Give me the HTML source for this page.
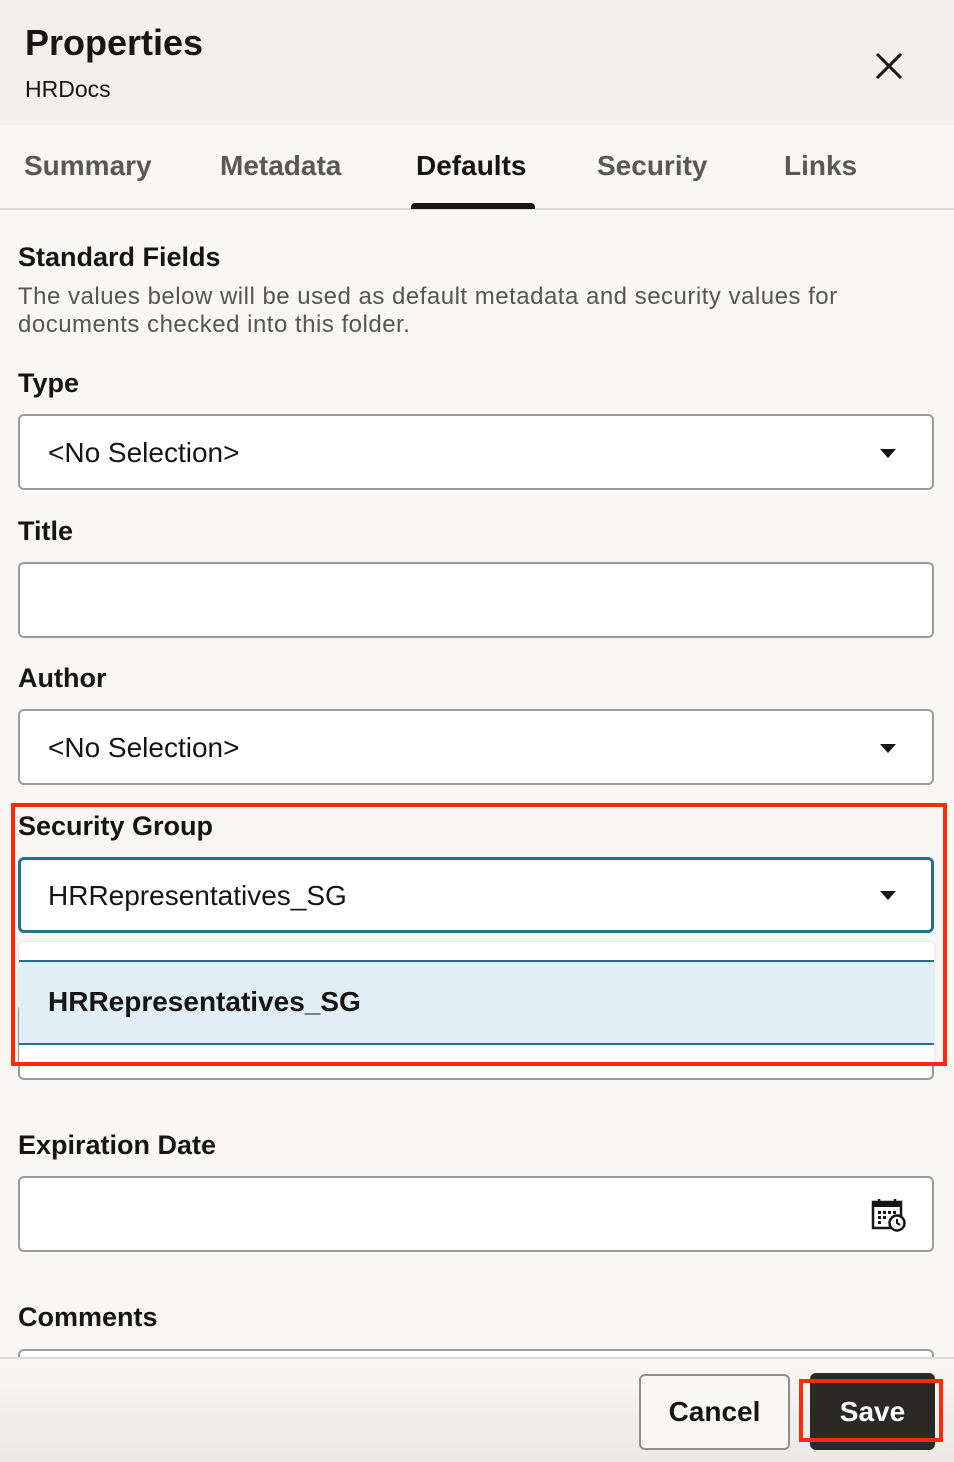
<!DOCTYPE html>
<html><head><style>
*{box-sizing:border-box;margin:0;padding:0}
body{width:954px;height:1462px;background:#f8f7f5;font-family:"Liberation Sans",sans-serif;color:#161513;position:relative;overflow:hidden}
.a{position:absolute}
.hdr{left:0;top:0;width:954px;height:125px;background:#f1f0ee}
.tab{top:150px;font-size:28px;color:#5a5856;font-weight:bold}
.lbl{font-size:27px;font-weight:bold;left:18px}
.inp{left:18px;width:916px;height:76px;background:#fff;border:2px solid #9b9a98;border-radius:6px}
.txt{left:28px;top:21px;font-size:28px}
.car{right:36px;top:33px;width:0;height:0;border-left:8px solid transparent;border-right:8px solid transparent;border-top:9px solid #161513}
</style></head><body>
<div class="a hdr"></div>
<div class="a" style="left:25px;top:22px;font-size:36px;font-weight:bold">Properties</div>
<div class="a" style="left:25px;top:76px;font-size:23px">HRDocs</div>
<svg class="a" style="left:875px;top:52px" width="28" height="28" viewBox="0 0 28 28"><path d="M2 2L26 26M26 2L2 26" stroke="#161513" stroke-width="3"/></svg>
<div class="a tab" style="left:24px">Summary</div>
<div class="a tab" style="left:220px">Metadata</div>
<div class="a tab" style="left:416px;color:#161513">Defaults</div>
<div class="a tab" style="left:597px">Security</div>
<div class="a tab" style="left:784px">Links</div>
<div class="a" style="left:0;top:208px;width:954px;height:2px;background:#dcdbd9"></div>
<div class="a" style="left:411px;top:203px;width:124px;height:6px;background:#161513;border-radius:4px 4px 0 0"></div>
<div class="a" style="left:18px;top:242px;font-size:27px;font-weight:bold">Standard Fields</div>
<div class="a" style="left:18px;top:283px;font-size:24px;letter-spacing:0.5px;color:#575553;line-height:28px;width:860px">The values below will be used as default metadata and security values for documents checked into this folder.</div>
<div class="a lbl" style="top:368px">Type</div>
<div class="a inp" style="top:414px"><div class="a txt">&lt;No Selection&gt;</div><div class="a car"></div></div>
<div class="a lbl" style="top:516px">Title</div>
<div class="a inp" style="top:562px"></div>
<div class="a lbl" style="top:663px">Author</div>
<div class="a inp" style="top:709px"><div class="a txt">&lt;No Selection&gt;</div><div class="a car"></div></div>
<div class="a lbl" style="top:811px">Security Group</div>
<div class="a inp" style="top:1004px"></div>
<div class="a inp" style="top:857px;border:3px solid #23708f;height:76px"><div class="a txt" style="left:27px;top:20px">HRRepresentatives_SG</div><div class="a car" style="right:35px;top:31px"></div></div>
<div class="a" style="left:19px;top:942px;width:915px;height:124px;background:#fff;border-radius:5px 5px 0 0;box-shadow:0 0 3px rgba(0,0,0,.15)"></div>
<div class="a" style="left:19px;top:960px;width:915px;height:85px;background:#e0eef5;border-top:2px solid #23708f;border-bottom:2px solid #23708f"></div>
<div class="a" style="left:48px;top:986px;font-size:28px;font-weight:bold">HRRepresentatives_SG</div>
<div class="a" style="left:11px;top:803px;width:936px;height:263px;border:4px solid #ff2a0a"></div>
<div class="a lbl" style="top:1130px">Expiration Date</div>
<div class="a inp" style="top:1176px">
<svg class="a" style="left:851px;top:20px" width="36" height="34" viewBox="0 0 36 34"><rect x="2" y="4" width="28" height="26" fill="none" stroke="#161513" stroke-width="2.5"/><rect x="2" y="4" width="28" height="5" fill="#161513"/><path d="M8 1v6M24 1v6" stroke="#161513" stroke-width="2.5"/><g fill="#161513"><rect x="7" y="13" width="3" height="3"/><rect x="12" y="13" width="3" height="3"/><rect x="17" y="13" width="3" height="3"/><rect x="22" y="13" width="3" height="3"/><rect x="7" y="18" width="3" height="3"/><rect x="12" y="18" width="3" height="3"/><rect x="7" y="23" width="3" height="3"/></g><circle cx="26" cy="25" r="7.5" fill="#fff" stroke="#161513" stroke-width="2.5"/><path d="M26 21v4l3 2" stroke="#161513" stroke-width="2" fill="none"/></svg></div>
<div class="a lbl" style="top:1302px">Comments</div>
<div class="a inp" style="top:1349px"></div>
<div class="a" style="left:0;top:1357px;width:954px;height:105px;background:linear-gradient(#f8f7f5,#e9e8e6);border-top:2px solid #dcdbd9"></div>
<div class="a" style="left:639px;top:1374px;width:151px;height:76px;border:2px solid #8f8e8c;border-radius:6px;background:#f8f7f5;font-size:28px;font-weight:bold;text-align:center;line-height:72px">Cancel</div>
<div class="a" style="left:810px;top:1373px;width:125px;height:77px;border-radius:6px;background:#2b2926;color:#fff;font-size:28px;font-weight:bold;text-align:center;line-height:77px">Save</div>
<div class="a" style="left:799px;top:1379px;width:144px;height:63px;border:4px solid #ff2a0a"></div>
</body></html>
